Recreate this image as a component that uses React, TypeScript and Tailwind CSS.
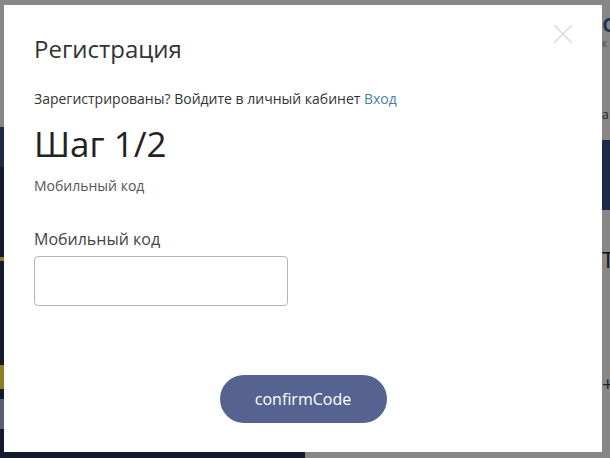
import React from "react";

const font = { fontFamily: '"Open Sans", "Noto Sans", sans-serif' };

function CloseIcon() {
  return (
    <svg width="20" height="20" viewBox="0 0 20 20" fill="none">
      <path d="M1 1 L19 19 M19 1 L1 19" stroke="#dcdcdc" strokeWidth="1.6" />
    </svg>
  );
}

export default function App() {
  return (
    <div className="relative w-[610px] h-[458px] overflow-hidden bg-[#878787]" style={font}>
      {/* page behind the overlay */}
      <div className="flex h-full">
        <div className="flex flex-col w-[305px]">
          <div className="h-[127px] bg-[#878787]" />
          <div className="flex-1 flex flex-col bg-[#141a2b]">
            <div className="h-[40px] bg-[#1e2945]" />
            <div className="h-[90px]" />
            <div className="h-[4px] w-[4px] bg-[#8a7a2a]" />
            <div className="h-[104px]" />
            <div className="h-[24px] w-[4px] bg-[#8f7d24]" />
            <div className="h-[10px]" />
            <div className="h-[30px] w-[4px] bg-[#5a6070]" />
          </div>
        </div>
        <div className="flex-1 flex flex-col items-end overflow-hidden">
          <div className="w-[8px] h-[24px] mt-[10px] overflow-hidden text-[26px] leading-[24px] text-[#1f3555] font-semibold">c</div>
          <div className="w-[8px] h-[10px] mt-[4px] overflow-hidden text-[10px] leading-[10px] text-[#4a4a4a]">к</div>
          <div className="w-[8px] h-[14px] mt-[60px] overflow-hidden text-[12px] leading-[14px] text-[#222]">а</div>
          <div className="w-[8px] h-[70px] mt-[18px] bg-[#1c2a4a]" />
          <div className="w-[8px] h-[26px] mt-[36px] overflow-hidden text-[22px] leading-[26px] text-[#111]">T</div>
          <div className="w-[8px] h-[24px] mt-[100px] overflow-hidden text-[20px] leading-[24px] text-[#222]">+</div>
        </div>
      </div>

      {/* modal */}
      <div className="absolute left-[4px] top-[5px] w-[598px] h-[447px] bg-white px-[30px] pt-[29px] flex flex-col">
        <button className="absolute left-[549px] top-[19px] w-[20px] h-[20px]">
          <CloseIcon />
        </button>
        <h2 className="text-[24px] leading-[30px] text-[#333]">Регистрация</h2>
        <p className="mt-[26px] text-[14px] leading-[18px] text-[#333]">
          Зарегистрированы? Войдите в личный кабинет <a className="text-[#4a7ea8]">Вход</a>
        </p>
        <div className="mt-[16px] text-[35px] leading-[40px] text-[#222]">Шаг 1/2</div>
        <div className="mt-[13px] text-[14px] leading-[18px] text-[#555]">Мобильный код</div>
        <label className="mt-[34px] text-[16px] leading-[20px] text-[#444]">Мобильный код</label>
        <input className="mt-[7px] w-[254px] h-[50px] border border-[#b5b5b5] rounded-[4px] px-3 outline-none" />
        <div className="mt-[69px] flex justify-center">
          <button className="w-[167px] h-[48px] rounded-full bg-[#566390] text-white text-[16px]">
            confirmCode
          </button>
        </div>
      </div>
    </div>
  );
}
